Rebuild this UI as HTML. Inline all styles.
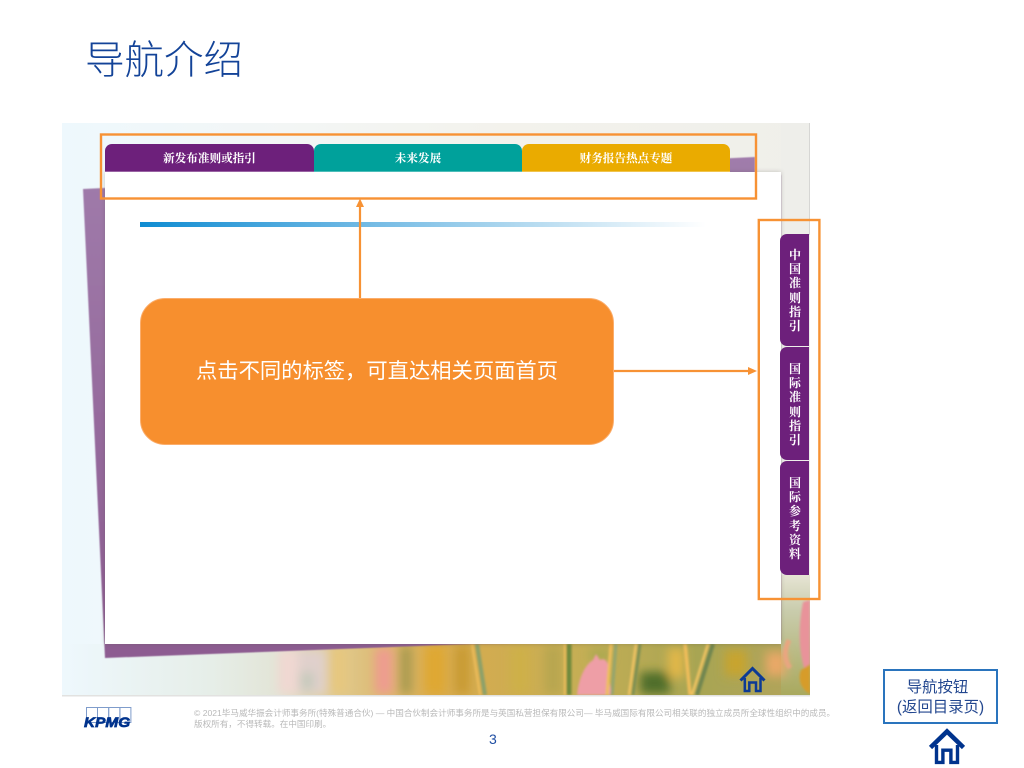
<!DOCTYPE html>
<html lang="zh-CN">
<head>
<meta charset="utf-8">
<title>导航介绍</title>
<style>
html,body{margin:0;padding:0;background:#fff;}
body{width:1024px;height:768px;position:relative;overflow:hidden;font-family:"Liberation Sans","Noto Sans CJK SC",sans-serif;}
.abs{position:absolute;}
#title{left:85px;top:33px;font-size:39.5px;line-height:56px;color:#134398;white-space:nowrap;font-weight:300;}
.tab{position:absolute;top:144px;height:28px;line-height:30px;text-align:center;color:#fff;font-family:"Liberation Serif","Noto Serif CJK SC",serif;font-weight:700;font-size:11.6px;border-radius:7px 7px 0 0;box-shadow:inset 0 -1px 0 rgba(255,255,255,.3);}
.side{position:absolute;left:780px;width:30px;background:linear-gradient(#6d207b,#6d207b) 0 0/29px 100% no-repeat;border-radius:7px 0 0 7px;color:#fff;text-align:center;font-family:"Liberation Serif","Noto Serif CJK SC",serif;font-weight:700;font-size:12px;line-height:14.2px;box-sizing:border-box;}
.side span{display:block;}
#call{left:140px;top:298px;width:474px;height:147px;box-sizing:border-box;background:#f78f2e;border:1.5px solid #fbad6b;border-radius:25px;color:#fff;font-size:21.3px;line-height:145px;text-align:center;white-space:nowrap;}
#foot{left:194px;top:708px;width:660px;font-size:8.58px;line-height:10.5px;color:#b9b9b9;white-space:nowrap;}
#num{left:489px;top:731px;font-size:14px;line-height:16px;color:#1f4ea3;}
#nav{left:883px;top:669px;width:115px;height:55px;box-sizing:border-box;border:2px solid #2a74bd;color:#23478f;font-size:15.4px;line-height:19.5px;text-align:center;padding-top:7px;white-space:nowrap;}
#nav span{position:relative;left:-3px;}
#kp{left:84px;top:713px;font-family:"Liberation Sans",sans-serif;font-weight:700;font-style:italic;font-size:14px;line-height:18px;color:#00338d;-webkit-text-stroke:.7px #00338d;transform:scaleX(1.1);transform-origin:0 0;}
</style>
</head>
<body>
<svg class="abs" style="left:0;top:0" width="1024" height="768" viewBox="0 0 1024 768">
<defs>
<linearGradient id="bg" x1="0" y1="0" x2="1" y2="0">
<stop offset="0" stop-color="#eef8fd"/><stop offset=".3" stop-color="#f3f6f5"/><stop offset=".6" stop-color="#f3f2ec"/><stop offset="1" stop-color="#efefea"/>
</linearGradient>
<linearGradient id="st" x1="0" y1="0" x2="1" y2="0">
<stop offset="0" stop-color="#eef8fd"/><stop offset=".2" stop-color="#e6eee8"/><stop offset=".29" stop-color="#e2e4d6"/><stop offset=".37" stop-color="#dfc88e"/><stop offset=".5" stop-color="#d9ab4e"/><stop offset=".7" stop-color="#c4ae55"/><stop offset=".85" stop-color="#a8a553"/><stop offset="1" stop-color="#b3a45c"/>
</linearGradient>
<linearGradient id="rule" x1="0" y1="0" x2="1" y2="0">
<stop offset="0" stop-color="#0f8cd2"/><stop offset=".35" stop-color="#66b4e2"/><stop offset=".65" stop-color="#acd6ee"/><stop offset="1" stop-color="#ffffff"/>
</linearGradient>
<linearGradient id="fade" x1="0" y1="0" x2="0" y2="1">
<stop offset="0" stop-color="#e6e4d4"/><stop offset=".3" stop-color="#c9ccac"/><stop offset="1" stop-color="#a9a95e"/>
</linearGradient>
<linearGradient id="pur" x1="0" y1="0" x2="0" y2="1">
<stop offset="0" stop-color="#a07cab"/><stop offset="1" stop-color="#8d5c91"/>
</linearGradient>
<filter id="b3" x="-10%" y="-30%" width="120%" height="160%"><feGaussianBlur stdDeviation="5"/></filter>
<filter id="b1"><feGaussianBlur stdDeviation="1.1"/></filter>
<filter id="b0"><feGaussianBlur stdDeviation=".5"/></filter>
<filter id="sh" x="-5%" y="-5%" width="110%" height="110%"><feGaussianBlur stdDeviation="2.5"/></filter>
<clipPath id="pc"><rect x="62" y="123" width="748" height="572"/></clipPath>
</defs>
<rect x="62" y="123" width="748" height="572" fill="url(#bg)"/>
<rect x="781" y="123" width="29" height="470" fill="#eeeeea"/>
<rect x="809" y="123" width="1" height="112" fill="#d6d6d4"/>
<g clip-path="url(#pc)">
<rect x="62" y="644" width="748" height="51" fill="url(#st)"/>
<rect x="781" y="575" width="29" height="120" fill="url(#fade)"/>
<g filter="url(#b3)">
<rect x="278" y="650" width="22" height="44" fill="#f0d8d2"/>
<rect x="298" y="650" width="28" height="44" fill="#e0d0cc"/>
<rect x="300" y="672" width="14" height="18" fill="#c6cabc"/>
<rect x="330" y="646" width="18" height="48" fill="#e6c77f"/>
<rect x="375" y="648" width="18" height="46" fill="#ee9c90"/>
<rect x="400" y="646" width="12" height="48" fill="#a89a50"/>
<rect x="425" y="646" width="20" height="48" fill="#dfa832"/>
<rect x="455" y="646" width="14" height="48" fill="#c89a30"/>
<rect x="510" y="646" width="20" height="48" fill="#ceb04a"/>
<rect x="545" y="646" width="16" height="48" fill="#b7a650"/>
<rect x="590" y="650" width="20" height="10" fill="#a8a850"/>
<rect x="640" y="672" width="30" height="22" fill="#4f6e2a"/>
<rect x="668" y="648" width="16" height="30" fill="#e2b748"/>
<rect x="725" y="650" width="22" height="26" fill="#c8a42e"/>
<rect x="766" y="652" width="20" height="24" fill="#eaa868"/>
</g>
<g filter="url(#b1)">
<path d="M577 695C579 676 586 664 593 660L596 654L600 660C606 657 610 664 608 674L612 695Z" fill="#ee9ea6"/>
<path d="M803 602C798 628 799 650 804 668L810 670V600Z" fill="#e8939a"/>
<path d="M801 670C797 680 802 690 810 694V664Z" fill="#d69c2a"/>
<path d="M789 640C784 650 784 660 790 668" stroke="#e8a680" stroke-width="5" fill="none"/>
<path d="M472 644L480 695" stroke="#efbe5c" stroke-width="2" fill="none"/>
<path d="M477 644L485 695" stroke="#8aa06a" stroke-width="4" fill="none"/>
<path d="M565 644V695" stroke="#efbe5c" stroke-width="2" fill="none"/>
<path d="M569 644V695" stroke="#6f8a3e" stroke-width="5" fill="none"/>
<path d="M611 644L607 695" stroke="#efbe5c" stroke-width="3" fill="none"/>
<path d="M616 644L612 695" stroke="#93a46e" stroke-width="3" fill="none"/>
<path d="M636 644L629 695" stroke="#f2c463" stroke-width="2.5" fill="none"/>
<path d="M640 644L633 695" stroke="#7d8f52" stroke-width="3" fill="none"/>
<path d="M685 644L690 695" stroke="#f0bd5a" stroke-width="3.5" fill="none"/>
<path d="M708 644L692 695" stroke="#f3c462" stroke-width="2.5" fill="none"/>
<path d="M713 644L697 695" stroke="#6f8550" stroke-width="4" fill="none"/>
</g>
</g>
<polygon points="83,189 755,157 755,175 781,175 781,640 470,644 105,658" fill="url(#pur)" filter="url(#b0)"/>
<rect x="105" y="172" width="676" height="472" fill="#55504a" opacity=".3" filter="url(#sh)"/>
<rect x="105" y="172" width="676" height="472" fill="#fff"/>
<rect x="62" y="695" width="748" height="1.5" fill="#e2e2e0"/>
<rect x="140" y="222" width="566" height="5" fill="url(#rule)"/>
</svg>

<div class="tab" style="left:105px;width:209px;background:#6d207b">新发布准则或指引</div>
<div class="tab" style="left:314px;width:208px;background:#00a19b">未来发展</div>
<div class="tab" style="left:522px;width:208px;background:#eaab00">财务报告热点专题</div>

<div class="side" style="top:234px;height:112px;padding-top:14px"><span>中</span><span>国</span><span>准</span><span>则</span><span>指</span><span>引</span></div>
<div class="side" style="top:347px;height:113px;padding-top:15px"><span>国</span><span>际</span><span>准</span><span>则</span><span>指</span><span>引</span></div>
<div class="side" style="top:461px;height:114px;padding-top:15px"><span>国</span><span>际</span><span>参</span><span>考</span><span>资</span><span>料</span></div>

<svg class="abs" style="left:0;top:0" width="1024" height="768" viewBox="0 0 1024 768">
<rect x="101" y="134.5" width="655" height="64" fill="none" stroke="#f79234" stroke-width="2.4"/>
<rect x="758.8" y="220" width="60.6" height="379" fill="none" stroke="#f79234" stroke-width="2.4"/>
<path d="M360 299V206" stroke="#f79234" stroke-width="2.2" fill="none"/>
<path d="M360 198.5L356 207H364Z" fill="#f79234"/>
<path d="M614 371H750" stroke="#f79234" stroke-width="2.2" fill="none"/>
<path d="M757 371L748 367V375Z" fill="#f79234"/>
<g fill="none" stroke="#0d3a94" stroke-linejoin="miter">
<path stroke-width="3" d="M740.5 680.5L752.5 668.5L764.5 680.5"/>
<path stroke-width="2.5" d="M744.8 678V691H749.3V682.5H756V691H760.5V678"/>
</g>
<g fill="none" stroke="#00338d" stroke-linejoin="miter">
<path stroke-width="4.6" d="M930.5 747.5L947 731.5L963.5 747.5"/>
<path stroke-width="3.4" d="M936.5 745V762.4H942.9V750.2H950.9V762.4H957.5V745"/>
</g>
<g fill="none" stroke="#7f9ccb" stroke-width="1">
<rect x="86.5" y="707.5" width="11" height="15"/>
<rect x="97.5" y="707.5" width="11.2" height="15"/>
<rect x="108.7" y="707.5" width="11.2" height="15"/>
<rect x="119.9" y="707.5" width="11" height="15"/>
</g>
</svg>

<div class="abs" id="title">导航介绍</div>
<div class="abs" id="call">点击不同的标签，可直达相关页面首页</div>
<div class="abs" id="kp">KPMG</div>
<div class="abs" id="foot">© 2021毕马威华振会计师事务所(特殊普通合伙) — 中国合伙制会计师事务所是与英国私营担保有限公司— 毕马威国际有限公司相关联的独立成员所全球性组织中的成员。<br>版权所有，不得转载。在中国印刷。</div>
<div class="abs" id="num">3</div>
<div class="abs" id="nav"><span>导航按钮</span><br>(返回目录页)</div>
</body>
</html>
